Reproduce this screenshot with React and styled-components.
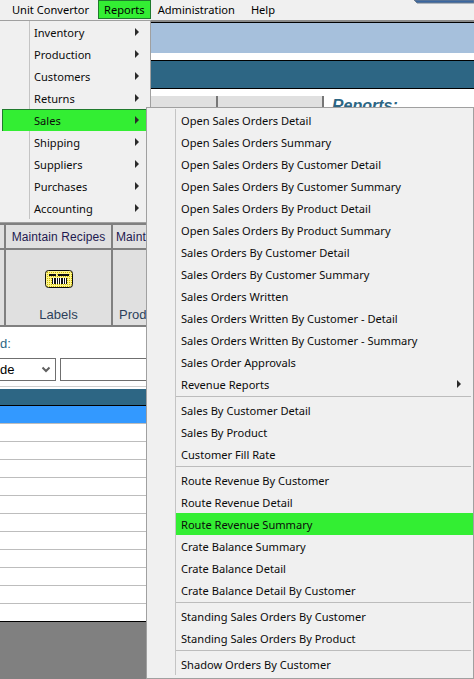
import React from 'react';
import styled, { createGlobalStyle } from 'styled-components';

const GlobalStyle = createGlobalStyle`
  html, body {
    margin: 0;
    padding: 0;
    background: #fff;
  }
`;

const mainMenu = ['Unit Convertor', 'Reports', 'Administration', 'Help'];
const barGaps = [3, 1, 4, 0];
const reportGroups = ['Inventory', 'Production', 'Customers', 'Returns', 'Sales', 'Shipping', 'Suppliers', 'Purchases', 'Accounting'];

const salesReports = [
  [
    { label: 'Open Sales Orders Detail' },
    { label: 'Open Sales Orders Summary' },
    { label: 'Open Sales Orders By Customer Detail' },
    { label: 'Open Sales Orders By Customer Summary' },
    { label: 'Open Sales Orders By Product Detail' },
    { label: 'Open Sales Orders By Product Summary' },
    { label: 'Sales Orders By Customer Detail' },
    { label: 'Sales Orders By Customer Summary' },
    { label: 'Sales Orders Written' },
    { label: 'Sales Orders Written By Customer - Detail' },
    { label: 'Sales Orders Written By Customer - Summary' },
    { label: 'Sales Order Approvals' },
    { label: 'Revenue Reports', more: true },
  ],
  [
    { label: 'Sales By Customer Detail' },
    { label: 'Sales By Product' },
    { label: 'Customer Fill Rate' },
  ],
  [
    { label: 'Route Revenue By Customer' },
    { label: 'Route Revenue Detail' },
    { label: 'Route Revenue Summary', active: true },
    { label: 'Crate Balance Summary' },
    { label: 'Crate Balance Detail' },
    { label: 'Crate Balance Detail By Customer' },
  ],
  [
    { label: 'Standing Sales Orders By Customer' },
    { label: 'Standing Sales Orders By Product' },
  ],
  [
    { label: 'Shadow Orders By Customer' },
  ],
];

const Page = styled.div`
  position: relative;
  width: 474px;
  height: 679px;
  overflow: hidden;
  display: flex;
  flex-direction: column;
  background: #fff;
  font-family: "Liberation Sans", Arial, sans-serif;
  font-size: 12px;
  color: #000;
`;

const MenuBar = styled.div`
  position: relative;
  flex: none;
  height: 20px;
  display: flex;
  padding-left: 6px;
  background: #f0f0f0;
  border-bottom: 2px solid #8a8a8a;
  font-family: "Noto Sans", sans-serif;
  font-size: 11.1px;
`;

const BarItem = styled.div`
  display: flex;
  align-items: center;
  height: 19px;
  padding: 0 6px;
  margin-right: ${({ $gap }) => $gap}px;
  background: ${({ $active }) => ($active ? '#33ee33' : 'transparent')};
  box-shadow: ${({ $active }) => ($active ? 'inset 0 0 0 1px #1f7a2c' : 'none')};
`;

const CornerShape = styled.svg`
  position: absolute;
  top: 0;
  right: 0;
`;

const Banner = styled.div`
  flex: none;
  height: 30px;
  background: #a6c0dc;
  border-top: 1px solid #000;
`;

const Band = styled.div`
  flex: none;
  height: 27px;
  margin-top: 7px;
  background: #2d6684;
  border-top: 1px solid #000;
  border-bottom: 1px solid #000;
`;

const TopSection = styled.div`
  flex: none;
  height: 127px;
  margin-top: 7px;
  display: flex;
  align-items: flex-start;
`;

const TopButton = styled.div`
  width: ${({ $w }) => $w}px;
  height: 40px;
  background: #e0e0e0;
  border-right: 2px solid #777;
  box-sizing: border-box;
`;

const Heading = styled.div`
  margin-left: 8px;
  font-size: 16px;
  line-height: 20px;
  font-weight: bold;
  font-style: italic;
  color: #2d6684;
`;

const TabRow = styled.div`
  flex: none;
  height: ${({ $h }) => $h}px;
  display: flex;
  background: #e0e0e0;
  border-top: 2px solid #808080;
  box-sizing: border-box;
`;

const Cell = styled.div`
  flex: none;
  width: ${({ $w }) => $w}px;
  box-sizing: border-box;
  border-right: 2px solid #808080;
  display: flex;
  flex-direction: column;
  align-items: ${({ $start }) => ($start ? 'flex-start' : 'center')};
  justify-content: ${({ $tool }) => ($tool ? 'space-between' : 'center')};
  padding: ${({ $tool, $start }) => ($tool ? `20px 0 3px ${$start ? 6 : 0}px` : `0 0 0 ${$start ? 3 : 0}px`)};
  color: #1e1a50;
  letter-spacing: 0.1px;
  white-space: nowrap;
  overflow: hidden;
`;

const ToolLabel = styled.span`
  font-size: 13px;
  letter-spacing: 0;
  color: #2d3f5a;
`;

const BottomRule = styled.div`
  flex: none;
  height: 2px;
  background: #808080;
`;

const FilterArea = styled.div`
  flex: none;
  height: 60px;
  padding-top: 10px;
  box-sizing: border-box;
  border-bottom: 1px solid #cfcfcf;
`;

const FilterLabel = styled.div`
  line-height: 14px;
  font-size: 13px;
  color: #2d6684;
`;

const FilterRow = styled.div`
  display: flex;
  gap: 4px;
  margin-top: 7px;
`;

const SelectBox = styled.div`
  width: 56px;
  height: 23px;
  box-sizing: border-box;
  border: 1px solid #6f6f6f;
  border-left: 0;
  display: flex;
  align-items: center;
  justify-content: space-between;
  padding-right: 4px;
  font-size: 13px;
`;

const TextBox = styled.div`
  width: 260px;
  height: 23px;
  box-sizing: border-box;
  border: 1px solid #6f6f6f;
`;

const TableHead = styled.div`
  flex: none;
  height: 16px;
  margin-top: 2px;
  background: #2d6684;
  border-bottom: 1px solid #000;
`;

const TableRow = styled.div`
  flex: none;
  height: 17px;
  background: ${({ $selected }) => ($selected ? '#3399ff' : '#fff')};
  border-bottom: 1px solid ${({ $last }) => ($last ? '#000' : '#bdbdbd')};
`;

const TableEnd = styled.div`
  flex: 1;
  background: #808080;
`;

const Flyout = styled.div`
  position: absolute;
  box-sizing: border-box;
  left: ${({ $left }) => $left}px;
  top: ${({ $top }) => $top}px;
  width: ${({ $width }) => $width}px;
  height: ${({ $height }) => $height}px;
  padding-top: ${({ $pad }) => $pad}px;
  background: #f0f0f0;
  border: 1px solid #a0a0a0;
  border-left-width: ${({ $noLeft }) => ($noLeft ? 0 : 1)}px;
  font-family: "Noto Sans", sans-serif;
  font-size: 11.1px;
  color: #0b0b0b;
`;

const Row = styled.div`
  position: relative;
  height: 22px;
  display: flex;
  align-items: stretch;
  background: ${({ $full }) => ($full ? '#33ee33' : 'transparent')};
`;

const Gutter = styled.div`
  flex: none;
  width: ${({ $w }) => $w}px;
  box-sizing: border-box;
  border-right: ${({ $hidden }) => ($hidden ? '0' : '1px solid #c4c4c4')};
`;

const Label = styled.div`
  flex: 1;
  display: flex;
  align-items: center;
  justify-content: space-between;
  padding: 0 ${({ $arrowGap }) => $arrowGap}px 0 ${({ $indent }) => $indent}px;
  background: ${({ $active }) => ($active ? '#33ee33' : 'transparent')};
  white-space: nowrap;
`;

const Arrow = styled.span`
  width: 0;
  height: 0;
  border-top: 4px solid transparent;
  border-bottom: 4px solid transparent;
  border-left: 4px solid #2a2a2a;
`;

const Separator = styled.div`
  height: 4px;
  display: flex;
  align-items: stretch;
`;

const SeparatorLine = styled.div`
  flex: 1;
  height: 1px;
  margin: 1px 2px 0 0;
  background: #bcbcbc;
`;

const SalesItem = styled(Row)`
  margin-left: 2px;
  box-shadow: inset 1px 0 0 #1f7a2c, inset 0 1px 0 #1f7a2c;
`;

const LabelIcon = () => (
  <svg width="28" height="18" viewBox="0 0 28 18">
    <defs>
      <pattern id="dots" width="2" height="2" patternUnits="userSpaceOnUse">
        <rect width="2" height="2" fill="#fff58a" />
        <rect width="1" height="1" fill="#c9b800" />
      </pattern>
    </defs>
    <rect x="0.5" y="0.5" width="27" height="17" rx="3" fill="url(#dots)" stroke="#111" />
    <path d="M4 4h7v2H4zM13 4h11v2H13z" fill="#111" />
    <path d="M7 8h14v6H7z" fill="#fff" />
    <path d="M7 8h1v6H7zM9 8h2v6H9zM12 8h1v6h-1zM14 8h1v6h-1zM16 8h2v6h-2zM19 8h1v6h-1zM21 8h1v6h-1z" fill="#111" />
  </svg>
);

export default function App() {
  return (
    <Page>
      <GlobalStyle />
      <MenuBar>
        {mainMenu.map((item, i) => (
          <BarItem key={item} $active={item === 'Reports'} $gap={barGaps[i]}>{item}</BarItem>
        ))}
        <CornerShape width="60" height="4" viewBox="0 0 60 4">
          <path d="M0 0l3 3h57V0z" fill="#3a66a0" stroke="#6e7d8c" strokeWidth="1" />
        </CornerShape>
      </MenuBar>
      <Banner />
      <Band />
      <TopSection>
        <TopButton $w={218} />
        <TopButton $w={106} />
        <Heading>Reports:</Heading>
      </TopSection>
      <TabRow $h={25}>
        <Cell $w={6} />
        <Cell $w={107}>Maintain Recipes</Cell>
        <Cell $w={110} $start>Maint</Cell>
      </TabRow>
      <TabRow $h={77}>
        <Cell $w={6} />
        <Cell $w={107} $tool>
          <LabelIcon />
          <ToolLabel>Labels</ToolLabel>
        </Cell>
        <Cell $w={110} $tool $start>
          <span />
          <ToolLabel>Prod</ToolLabel>
        </Cell>
      </TabRow>
      <BottomRule />
      <FilterArea>
        <FilterLabel>d:</FilterLabel>
        <FilterRow>
          <SelectBox>
            de
            <svg width="10" height="7" viewBox="0 0 10 7">
              <path d="M1.5 1.5L5 5l3.500-3.500" fill="none" stroke="#606060" strokeWidth="2" />
            </svg>
          </SelectBox>
          <TextBox />
        </FilterRow>
      </FilterArea>
      <TableHead />
      <TableRow $selected />
      {Array.from({ length: 10 }, (_, i) => <TableRow key={i} />)}
      <TableRow $last />
      <TableEnd />

      <Flyout $left={0} $top={20} $width={151} $height={203} $pad={0} $noLeft>
        {reportGroups.map((group) => {
          const content = (
            <>
              <Gutter $w={group === 'Sales' ? 28 : 30} $hidden={group === 'Sales'} />
              <Label $arrowGap={11} $indent={4}>
                {group}
                <Arrow />
              </Label>
            </>
          );
          return group === 'Sales'
            ? <SalesItem key={group} $full>{content}</SalesItem>
            : <Row key={group}>{content}</Row>;
        })}
      </Flyout>

      <Flyout $left={146} $top={107} $width={328} $height={572} $pad={1}>
        {salesReports.map((group, g) => (
          <React.Fragment key={g}>
            {g > 0 && (
              <Separator>
                <Gutter $w={29} />
                <SeparatorLine />
              </Separator>
            )}
            {group.map((item) => (
              <Row key={item.label}>
                <Gutter $w={29} />
                <Label $active={item.active} $arrowGap={12} $indent={5}>
                  {item.label}
                  {item.more && <Arrow />}
                </Label>
              </Row>
            ))}
          </React.Fragment>
        ))}
      </Flyout>
    </Page>
  );
}
